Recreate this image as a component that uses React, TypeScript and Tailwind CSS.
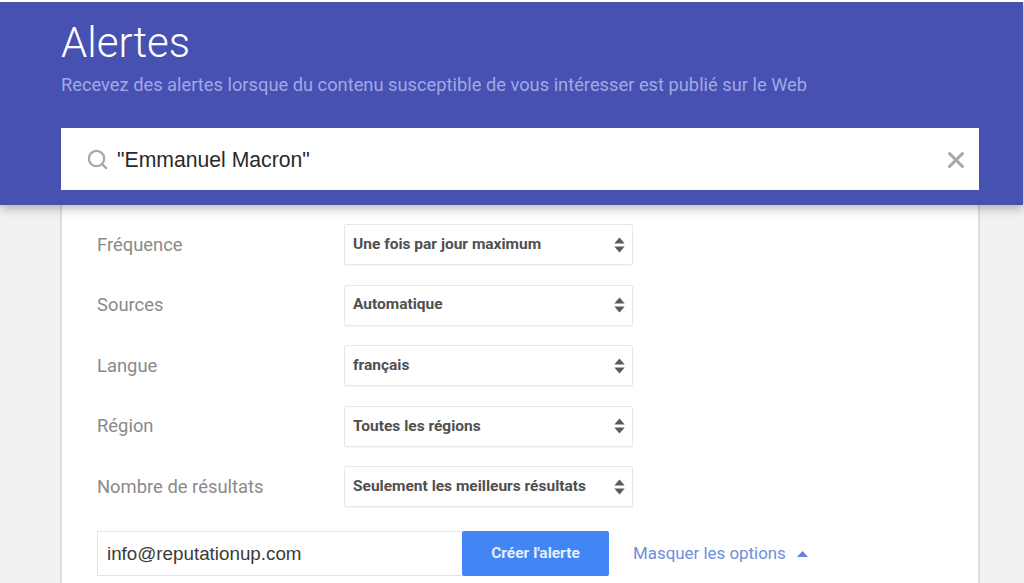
import React from 'react';
import { Search, X } from 'lucide-react';

const ROWS = [
  { label: 'Fréquence', value: 'Une fois par jour maximum' },
  { label: 'Sources', value: 'Automatique' },
  { label: 'Langue', value: 'français' },
  { label: 'Région', value: 'Toutes les régions' },
  { label: 'Nombre de résultats', value: 'Seulement les meilleurs résultats' },
];

function SelectArrows() {
  return (
    <svg width="11" height="16" viewBox="0 0 11 16" className="text-[#5a5a5a]">
      <path d="M5.5 0.5 L10.7 6.4 H0.3 Z" fill="currentColor" />
      <path d="M5.5 15.5 L10.7 9.6 H0.3 Z" fill="currentColor" />
    </svg>
  );
}

function OptionRow({ label, value }: { label: string; value: string }) {
  return (
    <div className="flex items-center h-[41px]">
      <div className="w-[247px] text-[18.4px] text-[#8a8a8a]">{label}</div>
      <div className="w-[289px] h-[41px] flex items-center justify-between pl-[8px] pr-[7px] bg-white border border-[#e8e8e8] rounded-[2px] shadow-[0_1px_1px_rgba(0,0,0,0.05)]">
        <span className="text-[15.5px] font-bold text-[#505050]">{value}</span>
        <SelectArrows />
      </div>
    </div>
  );
}

export default function App() {
  return (
    <div className="w-[1024px] h-[583px] overflow-hidden bg-[#f1f1f1] font-['Roboto',sans-serif] border-t-2 border-white">
      <header className="relative z-10 h-[203px] mr-[1px] bg-[#4751b1] px-[61px] shadow-[0_3px_10px_rgba(0,0,0,0.3)]">
        <h1 className="pt-[13px] text-[42px] leading-[56px] font-light text-white">Alertes</h1>
        <p className="mt-[2px] text-[18.3px] leading-[24px] text-[#a0a8e6]">
          Recevez des alertes lorsque du contenu susceptible de vous intéresser est publié sur le Web
        </p>
        <div className="mt-[31px] w-[918px] h-[62px] pt-[2px] bg-white flex items-center justify-between pl-[25px] pr-[10px]">
          <div className="flex items-center gap-[8px]">
            <Search size={23} strokeWidth={2.4} className="text-[#a8a8a8]" />
            <span className="text-[21.2px] text-[#2a2a2a] font-['Liberation_Sans',sans-serif]">"Emmanuel Macron"</span>
          </div>
          <X size={26} strokeWidth={2.8} className="text-[#a6a6a6]" />
        </div>
      </header>
      <main className="ml-[60px] w-[920px] h-[378px] bg-white border-x-2 border-[#dedede] pl-[35px] pt-[19px]">
        <div className="flex flex-col gap-[19.6px]">
          {ROWS.map((row) => (
            <OptionRow key={row.label} label={row.label} value={row.value} />
          ))}
        </div>
        <div className="flex items-center mt-[24px]">
          <div className="w-[365px] h-[45px] flex items-center pl-[9px] border border-[#e4e4e4] border-r-0 text-[18.8px] text-[#3a3a3a] font-['Liberation_Sans',sans-serif]">
            info@reputationup.com
          </div>
          <button className="w-[147px] h-[45px] rounded-[2px] bg-[#4285f4] text-[15.5px] font-bold text-[#e6eefc]">
            Créer l'alerte
          </button>
          <a className="ml-[24px] flex items-center gap-[11px] text-[16.9px] text-[#6f8fd8]">
            Masquer les options
            <svg width="11" height="6" viewBox="0 0 11 6"><path d="M5.5 0 L11 6 H0 Z" fill="#5f86dc" /></svg>
          </a>
        </div>
      </main>
    </div>
  );
}
